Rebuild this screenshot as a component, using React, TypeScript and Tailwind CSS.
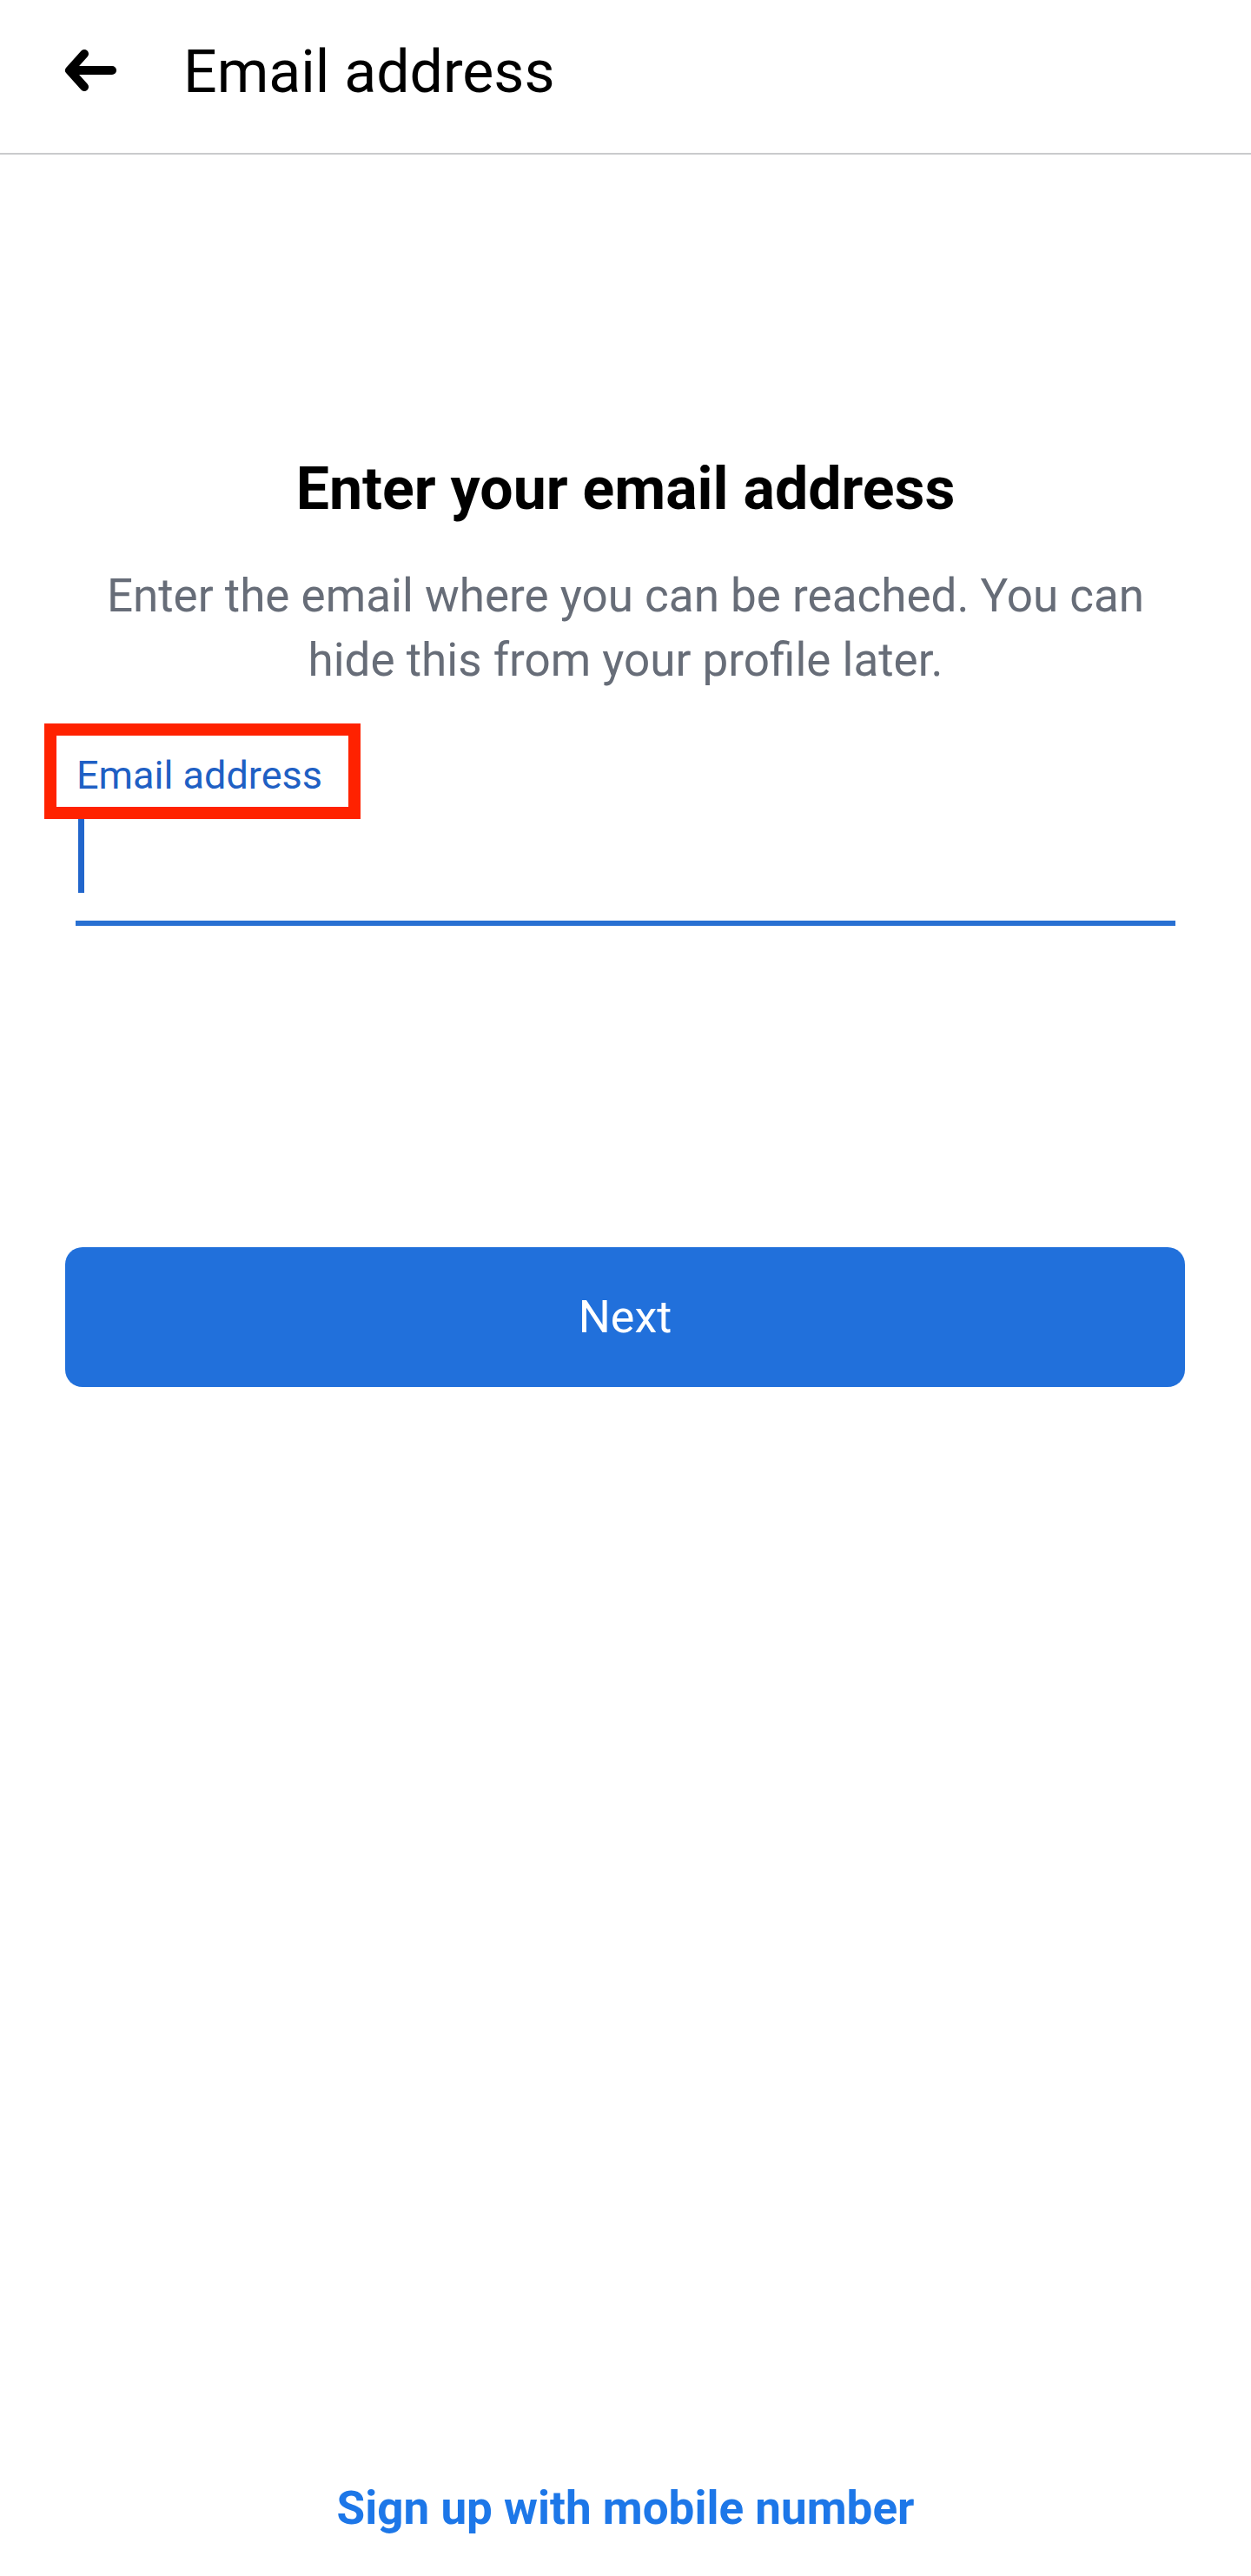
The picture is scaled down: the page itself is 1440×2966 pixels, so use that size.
export default function App() {
  return (
    <div className="min-h-[2966px] w-full bg-white flex flex-col font-['Roboto','Liberation_Sans',sans-serif] text-black">
      {/* Top bar */}
      <header className="h-[178px] border-b-2 border-[#cacbcd] flex items-start">
        <button className="mt-[55px] ml-[73px] w-[64px] h-[52px] shrink-0" aria-label="Back">
          <svg viewBox="0 0 64 52" width="64" height="52" fill="none">
            <path
              d="M7 26H56M24 7L7 26L24 45"
              stroke="#000"
              strokeWidth="10"
              strokeLinecap="round"
              strokeLinejoin="round"
            />
          </svg>
        </button>
        <h1 className="ml-[74px] mt-[45px] text-[68px] leading-[77px] font-normal">Email address</h1>
      </header>

      {/* Main content */}
      <main className="flex flex-col pt-[345px]">
        <h2 className="text-center text-[68px] leading-[80px] font-bold">Enter your email address</h2>
        <p className="mt-[46px] px-[100px] text-center text-[53px] leading-[74px] text-[#676d78]">
          Enter the email where you can be reached. You can hide this from your profile later.
        </p>

        <div className="mt-[69px] px-[87px]">
          <div className="relative">
            <label className="block pl-[1px] text-[45px] leading-[53px] text-[#1f60c4]">Email address</label>
            <div className="absolute left-[-36px] top-[-33px] w-[364px] h-[110px] border-[14px] border-[#ff2200]" />
          </div>
          <div className="pt-[24px] pb-[32px] border-b-[6px] border-[#2870d2]">
            <div className="ml-[3px] w-[7px] h-[85px] bg-[#2166cc]" />
          </div>
        </div>

        <div className="mt-[370px] pl-[75px] pr-[76px]">
          <button className="w-full h-[161px] rounded-[20px] bg-[#2170db] text-white text-[52px] leading-none">
            Next
          </button>
        </div>
      </main>

      <div className="mt-auto pb-[47px] text-center">
        <a href="#" className="text-[53px] leading-[61px] font-bold text-[#1d77e8]">
          Sign up with mobile number
        </a>
      </div>
    </div>
  );
}
